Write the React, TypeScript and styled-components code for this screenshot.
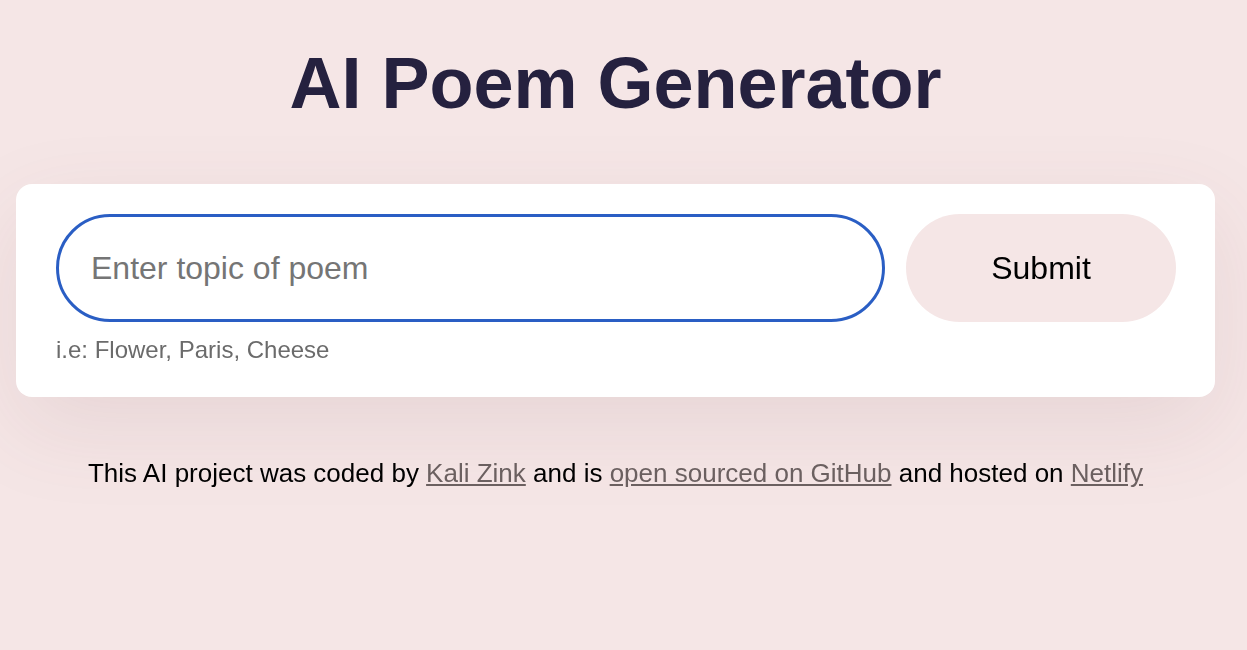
import React from "react";
import styled, { createGlobalStyle } from "styled-components";

const GlobalStyle = createGlobalStyle`
  html, body {
    margin: 0;
    padding: 0;
    background: #f5e6e6;
    font-family: "Liberation Sans", Arial, Helvetica, sans-serif;
  }
  * { box-sizing: border-box; }
`;

const Page = styled.main`
  width: calc(100% - 16px);
  padding: 42px 16px 40px;
`;

const Title = styled.h1`
  margin: 0 0 60px;
  text-align: center;
  font-size: 72px;
  font-weight: 700;
  color: #25213f;
  line-height: normal;
`;

const Card = styled.form`
  background: #ffffff;
  border-radius: 16px;
  padding: 30px 39px 33px 40px;
  box-shadow: 0 30px 90px rgba(120, 70, 80, 0.1);
`;

const Row = styled.div`
  display: flex;
  gap: 21px;
  align-items: stretch;
`;

const Input = styled.input`
  flex: 1;
  height: 108px;
  border: 3px solid #2a5ec4;
  border-radius: 54px;
  padding: 0 0 0 32px;
  font-family: inherit;
  font-size: 32px;
  color: #222;
  caret-color: #25213f;
  outline: none;
  background: #fff;
  &::placeholder {
    color: #757575;
  }
`;

const Button = styled.button`
  width: 270px;
  height: 108px;
  border: none;
  border-radius: 54px;
  background: #f5e6e6;
  font-family: inherit;
  font-size: 32px;
  color: #000;
  cursor: pointer;
`;

const Hint = styled.div`
  margin-top: 14px;
  font-size: 24px;
  color: #6b6b6b;
`;

const Footer = styled.footer`
  margin-top: 61px;
  text-align: center;
  font-size: 26px;
  color: #000;
`;

const Link = styled.a`
  color: #6b6060;
  text-decoration: underline;
`;

export default function App() {
  return (
    <>
      <GlobalStyle />
      <Page>
        <Title>AI Poem Generator</Title>
        <Card onSubmit={(e) => e.preventDefault()}>
          <Row>
            <Input type="text" placeholder="Enter topic of poem" autoFocus />
            <Button type="submit">Submit</Button>
          </Row>
          <Hint>i.e: Flower, Paris, Cheese</Hint>
        </Card>
        <Footer>
          This AI project was coded by <Link href="#">Kali Zink</Link> and is{" "}
          <Link href="#">open sourced on GitHub</Link> and hosted on{" "}
          <Link href="#">Netlify</Link>
        </Footer>
      </Page>
    </>
  );
}
